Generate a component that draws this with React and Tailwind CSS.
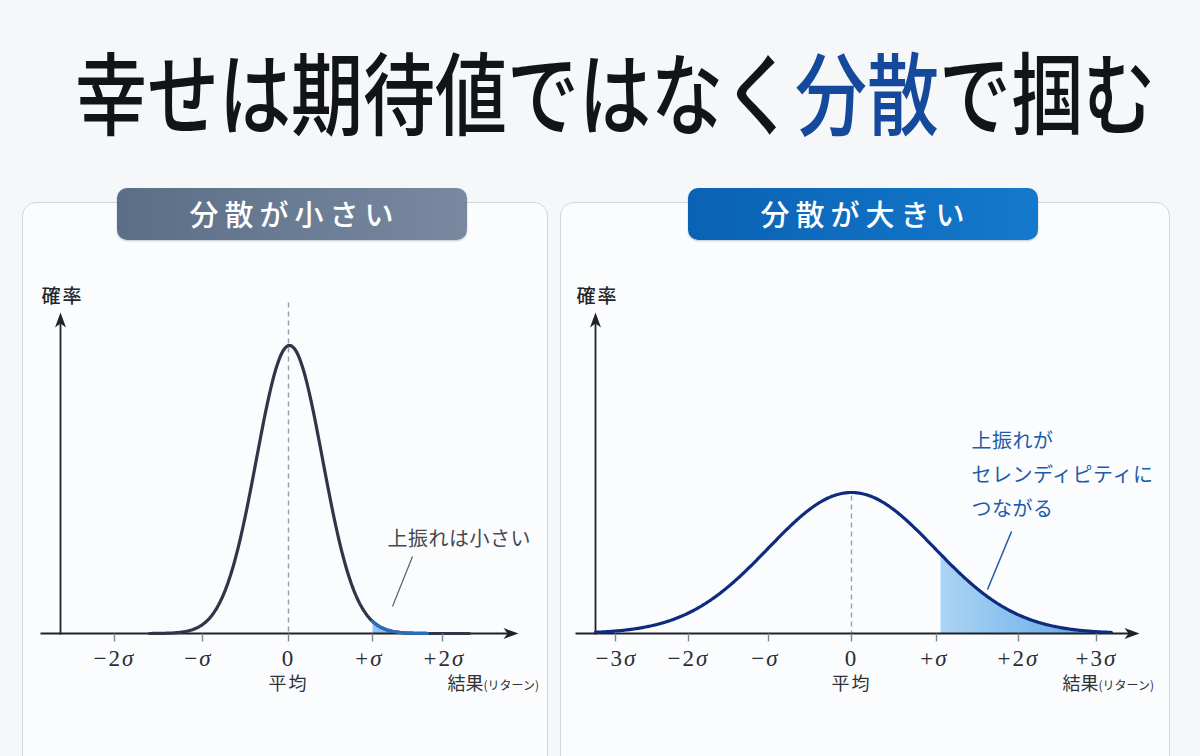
import React from 'react';

// gaussian points in page coordinates (svg viewBox is offset to the panel)
const curvePoints = (cx, base, peak, s, x0, x1) => {
  const h = base - peak;
  const pts = [];
  for (let x = x0; x <= x1; x += 1) {
    pts.push([x, base - h * Math.exp(-((x - cx) ** 2) / (2 * s * s))]);
  }
  return pts;
};

const toPath = (pts) =>
  pts.map(([x, y], i) => `${i ? 'L' : 'M'}${x.toFixed(1)} ${y.toFixed(1)}`).join(' ');

const areaPath = (pts, base) =>
  `${toPath(pts)} L${pts[pts.length - 1][0]} ${base} L${pts[0][0]} ${base} Z`;

const BASE = 634;

const LEFT_CURVE = curvePoints(290, BASE, 346, 33, 150, 470);
const LEFT_FILL = curvePoints(290, BASE, 346, 33, 373, 440);
const LEFT_BLUE = curvePoints(290, BASE, 346, 33, 373, 428);

const RIGHT_CURVE = curvePoints(852, BASE, 493, 83, 596, 1112);
const RIGHT_FILL = curvePoints(852, BASE, 493, 83, 941, 1112);

const LEFT_TICKS = [
  { x: 115, lx: 115, sign: '−', n: '2' },
  { x: 203, lx: 199, sign: '−', n: '' },
  { x: 289, lx: 289, zero: true },
  { x: 373, lx: 370, sign: '+', n: '' },
  { x: 443, lx: 445, sign: '+', n: '2' },
];

const RIGHT_TICKS = [
  { x: 616, lx: 617, sign: '−', n: '3' },
  { x: 689, lx: 689, sign: '−', n: '2' },
  { x: 769, lx: 766, sign: '−', n: '' },
  { x: 852, lx: 852, zero: true },
  { x: 937, lx: 935, sign: '+', n: '' },
  { x: 1019, lx: 1019, sign: '+', n: '2' },
  { x: 1097, lx: 1097, sign: '+', n: '3' },
];

const Axes = ({ left, yAxis, right, top }) => (
  <g>
    <line x1={left} y1={BASE} x2={right - 8} y2={BASE} stroke="#1f2329" strokeWidth="1.8" />
    <path
      d={`M${right} ${BASE} L${right - 15} ${BASE - 5.5} L${right - 11} ${BASE} L${right - 15} ${BASE + 5.5} Z`}
      fill="#1f2329"
    />
    <line x1={yAxis} y1={BASE + 1} x2={yAxis} y2={top + 8} stroke="#1f2329" strokeWidth="1.8" />
    <path
      d={`M${yAxis} ${top} L${yAxis - 5.5} ${top + 15} L${yAxis} ${top + 11} L${yAxis + 5.5} ${top + 15} Z`}
      fill="#1f2329"
    />
  </g>
);

const Ticks = ({ ticks }) => (
  <g>
    {ticks.map((t) => (
      <g key={t.x}>
        <line x1={t.x} y1={BASE} x2={t.x} y2={BASE + 8} stroke="#80858c" strokeWidth="1.4" />
        <text
          x={t.lx}
          y={666}
          textAnchor="middle"
          className="fill-[#2a2d33] font-['Liberation_Serif',serif] text-[23px] tracking-[2px]"
        >
          {t.zero ? '0' : (
            <>
              {t.sign}
              {t.n}
              <tspan className="italic">σ</tspan>
            </>
          )}
        </text>
      </g>
    ))}
  </g>
);

const AxisTexts = ({ probX, meanX, resultX }) => (
  <g>
    <text x={probX} y={303} className="fill-[#23262b] text-[19px] font-medium tracking-[2px]">
      確率
    </text>
    <text x={meanX} y={690} textAnchor="middle" className="fill-[#2e3136] text-[18px] tracking-[2px]">
      平均
    </text>
    <text x={resultX} y={690} className="fill-[#2e3136]">
      <tspan className="text-[18px]">結果</tspan>
      <tspan className="text-[12px]">(リターン)</tspan>
    </text>
  </g>
);

const Badge = ({ children, className }) => (
  <div
    className={`absolute -top-[15.5px] z-10 flex h-[52px] w-[350px] items-center justify-center rounded-[10px] pl-[6px] text-[29px] font-medium tracking-[6px] text-white shadow-[0_1px_2px_rgba(30,40,60,0.25)] ${className}`}
  >
    {children}
  </div>
);

const SmallVariance = () => (
  <section className="relative h-[600px] rounded-[14px] border-[1.5px] border-[#cfd6df] bg-[#fbfcfd]">
    <Badge className="left-[93.5px] bg-linear-to-r from-[#5c6e87] to-[#7889a0]">分散が小さい</Badge>
    <svg className="block" width="523" height="540" viewBox="23.5 203.5 523 540">
      <defs>
        <linearGradient id="leftFill" x1="0" y1="0" x2="1" y2="0">
          <stop offset="0" stopColor="#98c9f2" />
          <stop offset="1" stopColor="#4f97df" />
        </linearGradient>
      </defs>
      <path d={areaPath(LEFT_FILL, BASE)} fill="url(#leftFill)" />
      <line x1={289} y1={303} x2={289} y2={BASE} stroke="#9a9ea5" strokeWidth="1.4" strokeDasharray="5 4" />
      <Axes left={41} yAxis={61} right={519} top={313} />
      <path d={toPath(LEFT_CURVE)} fill="none" stroke="#2e3648" strokeWidth="3.2" strokeLinecap="round" />
      <path d={toPath(LEFT_BLUE)} fill="none" stroke="#2b6cbf" strokeWidth="3.2" strokeLinecap="round" />
      <Ticks ticks={LEFT_TICKS} />
      <AxisTexts probX={42} meanX={289} resultX={448} />
      <text x={388} y={546} className="fill-[#45484e] text-[20px] tracking-[0.5px]">
        上振れは小さい
      </text>
      <line x1={413} y1={557} x2={393} y2={607} stroke="#5b5f66" strokeWidth="1.2" />
    </svg>
  </section>
);

const LargeVariance = () => (
  <section className="relative h-[600px] rounded-[14px] border-[1.5px] border-[#cfd6df] bg-[#fbfcfd]">
    <Badge className="left-[126.5px] bg-linear-to-r from-[#0a62b4] to-[#1479cc]">分散が大きい</Badge>
    <svg className="block" width="607" height="540" viewBox="561.5 203.5 607 540">
      <defs>
        <linearGradient id="rightFill" x1="0" y1="0" x2="1" y2="0">
          <stop offset="0" stopColor="#acd4f4" />
          <stop offset="0.6" stopColor="#7ab7ec" />
          <stop offset="1" stopColor="#5aa2e4" />
        </linearGradient>
      </defs>
      <path d={areaPath(RIGHT_FILL, BASE)} fill="url(#rightFill)" />
      <line x1={852} y1={496} x2={852} y2={BASE} stroke="#9a9ea5" strokeWidth="1.4" strokeDasharray="5 4" />
      <Axes left={576} yAxis={596} right={1140} top={313} />
      <path d={toPath(RIGHT_CURVE)} fill="none" stroke="#0f2b7f" strokeWidth="3.2" strokeLinecap="round" />
      <Ticks ticks={RIGHT_TICKS} />
      <AxisTexts probX={577} meanX={852} resultX={1063} />
      <text className="fill-[#1d5cab] text-[20px] tracking-[0.5px]">
        <tspan x={972} y={448}>上振れが</tspan>
        <tspan x={972} y={482}>セレンディピティに</tspan>
        <tspan x={972} y={516}>つながる</tspan>
      </text>
      <line x1={1012} y1={532} x2={988} y2={590} stroke="#2358a8" strokeWidth="1.5" />
    </svg>
  </section>
);

const App = () => (
  <div className="relative h-[756px] w-[1200px] overflow-hidden bg-[#f6f7f9] font-['Noto_Sans_CJK_JP',sans-serif]">
    <div className="flex justify-center pl-[30px] pt-[53px]">
      <h1 className="h-[72px] origin-center scale-y-125 text-[72px] font-medium leading-none text-[#121418]">
        幸せは期待値ではなく<span className="text-[#14499b]">分散</span>で掴む
      </h1>
    </div>

    <div className="mt-[77px] grid grid-cols-[526px_610px] gap-[12px] pl-[22px]">
      <SmallVariance />
      <LargeVariance />
    </div>
  </div>
);

export default App;
